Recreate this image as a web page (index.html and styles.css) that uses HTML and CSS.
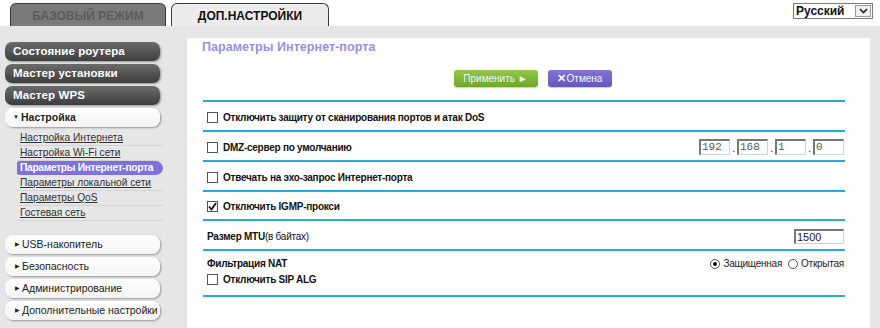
FILE: index.html
```html
<!DOCTYPE html>
<html lang="ru">
  <head>
    <meta charset="UTF-8" />
    <title>Параметры Интернет-порта</title>
    <link rel="stylesheet" href="styles.css">
  </head>
  <body>
    <div class="top">
      <div class="tabs">
        <div class="tab tab-basic">БАЗОВЫЙ РЕЖИМ</div>
        <div class="tab tab-adv">ДОП.НАСТРОЙКИ</div>
      </div>
      <div class="lang">
        <span class="lang-text">Русский</span>
        <span class="lang-arrow">
          <svg width="9" height="6" viewBox="0 0 9 6"><path d="M1 1 L4.5 4.5 L8 1" fill="none" stroke="#222" stroke-width="1.6"/></svg>
        </span>
      </div>
    </div>

    <div class="page">
      <div class="sidebar">
        <div class="menu-dark">Состояние роутера</div>
        <div class="menu-dark">Мастер установки</div>
        <div class="menu-dark">Мастер WPS</div>
        <div class="menu-light menu-open"><span class="tri">&#9660;</span>Настройка</div>
        <div class="submenu">
          <div class="sub-item">Настройка Интернета</div>
          <div class="sub-item">Настройка Wi-Fi сети</div>
          <div class="sub-item active">Параметры Интернет-порта</div>
          <div class="sub-item">Параметры локальной сети</div>
          <div class="sub-item">Параметры QoS</div>
          <div class="sub-item">Гостевая сеть</div>
        </div>
        <div class="menu-light group-start"><span class="tri">&#9654;</span>USB-накопитель</div>
        <div class="menu-light"><span class="tri">&#9654;</span>Безопасность</div>
        <div class="menu-light"><span class="tri">&#9654;</span>Администрирование</div>
        <div class="menu-light"><span class="tri">&#9654;</span>Дополнительные настройки</div>
      </div>

      <div class="panel">
        <div class="panel-title">Параметры Интернет-порта</div>
        <div class="actions">
          <div class="btn btn-apply">Применить &#9658;</div>
          <div class="btn btn-cancel"><span class="x">&#10005;</span>Отмена</div>
        </div>

        <div class="rows">
          <div class="row">
            <label class="opt"><span class="box"></span>Отключить защиту от сканирования портов и атак DoS</label>
          </div>
          <div class="row">
            <label class="opt"><span class="box"></span>DMZ-сервер по умолчанию</label>
            <div class="ip">
              <span class="field">192</span><span class="dot">.</span>
              <span class="field">168</span><span class="dot">.</span>
              <span class="field">1</span><span class="dot">.</span>
              <span class="field">0</span>
            </div>
          </div>
          <div class="row">
            <label class="opt"><span class="box"></span>Отвечать на эхо-запрос Интернет-порта</label>
          </div>
          <div class="row row-tight">
            <label class="opt"><span class="box checked"><svg width="9" height="9" viewBox="0 0 9 9"><path d="M1 4.5 L3.5 7.5 L8 1" fill="none" stroke="#111" stroke-width="1.8"/></svg></span>Отключить IGMP-прокси</label>
          </div>
          <div class="row">
            <div class="label">Размер MTU<span class="light">(в байтах)</span></div>
            <span class="field field-mtu">1500</span>
          </div>
          <div class="row row-nat">
            <div class="nat-line">
              <div class="label">Фильтрация NAT</div>
              <div class="radios">
                <span class="radio on"></span>Защищенная
                <span class="radio"></span>Открытая
              </div>
            </div>
            <label class="opt"><span class="box"></span>Отключить SIP ALG</label>
          </div>
        </div>
      </div>
    </div>
  </body>
</html>
```

FILE: styles.css
```css
body {
  margin: 0;
  font-family: "Liberation Sans", Arial, sans-serif;
  font-size: 11px;
  color: #111;
  background: white;
}

.top {
  height: 26px;
  display: flex;
  justify-content: space-between;
  align-items: flex-start;
  padding: 3px 7px 0 10px;
  box-sizing: border-box;
}

.tabs {
  display: flex;
  gap: 5px;
  height: 23px;
}

.tab {
  width: 156px;
  height: 23px;
  box-sizing: border-box;
  border: 1px solid #3c3c3c;
  border-bottom: none;
  border-radius: 6px 6px 0 0;
  text-align: center;
  font-weight: bold;
  font-size: 12px;
  line-height: 24px;
}

.tab-basic {
  background: #7a7a7a;
  color: #5c5c5c;
}

.tab-adv {
  width: 158px;
  background: #ececec;
  color: #111;
}

.lang {
  width: 80px;
  height: 16px;
  box-sizing: border-box;
  border: 1px solid #7a7a7a;
  display: flex;
  align-items: center;
  justify-content: space-between;
  font-weight: bold;
  font-size: 12px;
  padding-left: 2px;
}

.lang-arrow {
  width: 16px;
  height: 12px;
  margin-right: 1px;
  border: 1px solid #9a9a9a;
  background: #eeeeee;
  display: flex;
  align-items: center;
  justify-content: center;
  box-sizing: border-box;
}

.page {
  display: flex;
  background: #e6e6e6;
  height: 302px;
}

.sidebar {
  width: 182px;
  padding: 16px 0 0 5px;
  white-space: nowrap;
}

.menu-dark {
  width: 155px;
  height: 19px;
  margin-bottom: 3px;
  box-sizing: border-box;
  border-radius: 7px;
  background: linear-gradient(#6b6b6b, #3d3d3d);
  box-shadow: 1px 1px 2px rgba(0, 0, 0, 0.35);
  color: white;
  font-weight: bold;
  font-size: 11.5px;
  letter-spacing: 0.1px;
  line-height: 19px;
  padding-left: 8px;
}

.menu-light {
  width: 155px;
  height: 19px;
  margin-bottom: 3px;
  box-sizing: border-box;
  border-radius: 8px;
  background: linear-gradient(#ffffff, #f4f4f4);
  box-shadow: 1px 1px 2px rgba(0, 0, 0, 0.35);
  color: #222;
  font-size: 10.5px;
  line-height: 19px;
  padding-left: 10px;
}

.menu-light .tri {
  font-size: 6px;
  vertical-align: 2px;
  margin-right: 2px;
}

.menu-open {
  font-weight: bold;
  padding-left: 8px;
}

.group-start {
  margin-top: 14px;
}

.submenu {
  margin: 4px 0 0 12px;
  width: 146px;
}

.sub-item {
  height: 14px;
  line-height: 14px;
  border-bottom: 1px solid #d4d4d4;
  padding-left: 3px;
  color: #333;
  font-size: 10.2px;
  text-decoration: underline;
}

.sub-item.active {
  background: #7e72da;
  color: white;
  font-weight: bold;
  letter-spacing: -0.3px;
  text-decoration: none;
  border-radius: 3px 8px 8px 3px;
  border-bottom-color: #e6e6e6;
}

.panel {
  width: 683px;
  margin-top: 12px;
  background: white;
}

.panel-title {
  padding: 2px 15px 0;
  color: #9a8fdc;
  font-weight: bold;
  font-size: 12.6px;
  line-height: 14px;
}

.actions {
  display: flex;
  justify-content: center;
  gap: 10px;
  margin: 16px 0 0 8px;
}

.btn {
  height: 17px;
  line-height: 17px;
  border-radius: 3px;
  color: #f4f4f4;
  font-size: 10px;
  text-align: center;
  box-shadow: 0 1px 1px rgba(0, 0, 0, 0.2);
}

.btn-apply {
  width: 84px;
  background: linear-gradient(#92c94a, #6fa72c);
}

.btn-cancel {
  width: 64px;
  background: linear-gradient(#8275d6, #6457bd);
}

.btn-cancel .x {
  font-size: 11px;
  font-weight: bold;
  margin-right: 1px;
}

.rows {
  margin: 13px 0 0 16px;
  width: 642px;
  border-top: 2px solid #27a9e0;
  font-size: 10px;
  letter-spacing: -0.25px;
}

.row {
  height: 30px;
  padding-top: 2px;
  box-sizing: border-box;
  border-bottom: 2px solid #27a9e0;
  display: flex;
  align-items: center;
  justify-content: space-between;
  padding-left: 4px;
  padding-right: 1px;
}

.row-tight {
  height: 29px;
}

.row-nat {
  height: 46px;
  flex-direction: column;
  align-items: stretch;
  justify-content: flex-start;
  padding-top: 7px;
  gap: 5px;
}

.nat-line {
  display: flex;
  justify-content: space-between;
  align-items: center;
}

.opt,
.label {
  display: flex;
  align-items: center;
  font-weight: bold;
}

.light {
  font-weight: normal;
}

.box {
  width: 11px;
  height: 11px;
  box-sizing: border-box;
  border: 1px solid #555;
  background: white;
  margin-right: 5px;
  display: flex;
  align-items: center;
  justify-content: center;
}

.ip {
  display: flex;
  align-items: flex-end;
}

.field {
  width: 31px;
  height: 16px;
  box-sizing: border-box;
  border: 1px solid #d2d2d2;
  border-top: 2px solid #777;
  border-left: 2px solid #777;
  font-family: "Liberation Mono", "DejaVu Sans Mono", monospace;
  font-size: 11px;
  letter-spacing: 0;
  color: #555;
  line-height: 13px;
  padding-left: 1px;
}

.dot {
  width: 7px;
  text-align: center;
  line-height: 12px;
}

.field-mtu {
  width: 50px;
  height: 15px;
  font-family: "Liberation Sans", Arial, sans-serif;
  color: #222;
  line-height: 12px;
}

.radios {
  display: flex;
  align-items: center;
  font-weight: normal;
  color: #222;
}

.radio {
  width: 10px;
  height: 10px;
  box-sizing: border-box;
  border: 1px solid #555;
  border-radius: 50%;
  margin: 0 3px 0 0;
  display: flex;
  align-items: center;
  justify-content: center;
}

.radios .radio:nth-of-type(2) {
  margin-left: 6px;
}

.radio.on::after {
  content: "";
  width: 4px;
  height: 4px;
  border-radius: 50%;
  background: #111;
}
```
